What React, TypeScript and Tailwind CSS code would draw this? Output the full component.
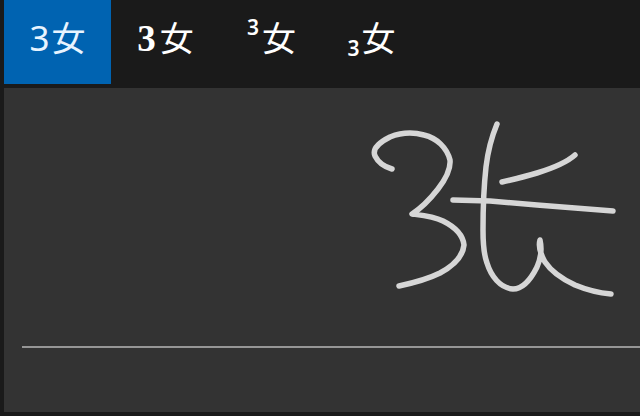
const font = "font-['Noto_Sans','Noto_Sans_CJK_SC',sans-serif]";

function Glyph() {
  return <span className="text-[34px] leading-[42px] font-normal font-['Noto_Sans_CJK_JP',sans-serif]">女</span>;
}

export default function App() {
  return (
    <div className={`flex h-[416px] w-[640px] flex-col overflow-hidden bg-[#1a1a1a] pb-[4px] pl-[4px] text-white ${font}`}>
      <div className="flex h-[88px] shrink-0">
        <div className="flex h-[84px] w-[107px] items-baseline justify-center bg-[#0063b1] pt-[16px] text-[#e8f4ff]">
          <span className="mr-[2px] text-[35px] leading-[42px]">3</span>
          <Glyph />
        </div>
        <div className="flex h-[84px] w-[109px] items-baseline justify-center pt-[16px]">
          <span className="mr-[4px] text-[37px] leading-[42px] font-bold font-['Liberation_Serif',serif]">3</span>
          <Glyph />
        </div>
        <div className="flex h-[84px] w-[103px] items-baseline justify-center pt-[16px]">
          <span className="mr-[3px] text-[21px] leading-[42px] font-semibold -translate-y-[16px]">3</span>
          <Glyph />
        </div>
        <div className="flex h-[84px] w-[97px] items-baseline justify-center pt-[16px]">
          <span className="mr-[2px] text-[21px] leading-[42px] font-semibold translate-y-[5px]">3</span>
          <Glyph />
        </div>
      </div>
      <div className="relative flex-1 bg-[#333333] pl-[18px] pt-[258px]">
        <div className="h-[2px] bg-[#969696]" />
        <svg
          className="absolute -left-[4px] -top-[88px]"
          width="640"
          height="416"
          viewBox="0 0 640 416"
          fill="none"
          stroke="#d6d6d6"
          strokeWidth="5.5"
          strokeLinecap="round"
          strokeLinejoin="round"
        >
          <path d="M392 169C385 167 378 162 375 156C372 149 378 143 390 137C400 133 413 132 424 135C437 138 447 148 450 160C451 170 445 180 438 189C431 198 423 207 412 214C420 215 433 216 443 221C455 227 463 235 464 245C463 256 453 266 440 273C428 279 413 283 399 286" />
          <path d="M497 124C492 136 488 150 486 167C484 185 483 205 483 230C483 245 484 255 487 263C491 276 500 288 513 289C523 289 531 279 537 267C541 258 542 249 540 240C538 247 541 255 545 262C551 271 562 279 575 285C587 290 600 293 611 294" />
          <path d="M453 200L490 201L537 205L613 211" />
          <path d="M502 182C515 179 527 176 537 173C550 169 566 163 575 155" />
        </svg>
      </div>
    </div>
  );
}
